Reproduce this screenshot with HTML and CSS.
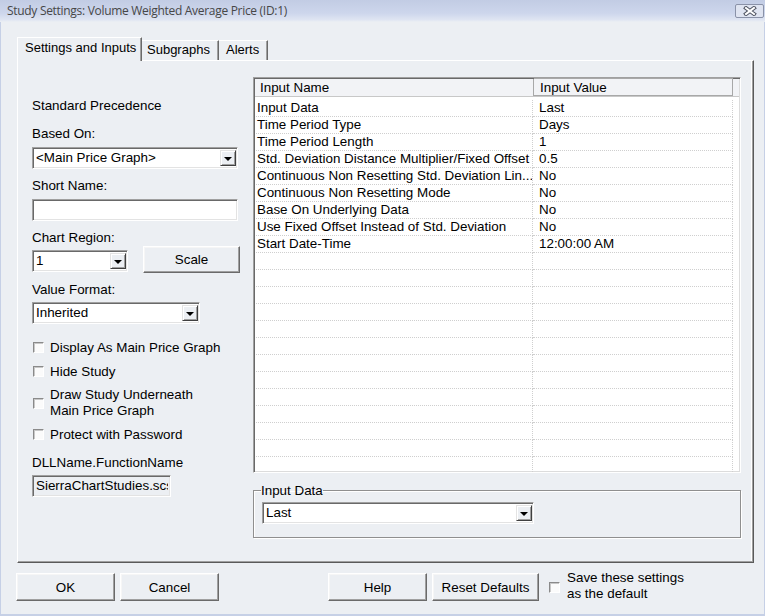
FILE: index.html
```html
<!DOCTYPE html>
<html>
<head>
<meta charset="utf-8">
<link rel="stylesheet" href="styles.css">
</head>
<body>
<div class="window">
  <div class="titlebar">
    <span class="title">Study Settings: Volume Weighted Average Price (ID:1)</span>
    <div class="close">
      <svg width="14" height="10" viewBox="0 0 14 10"><path d="M3 2 L11 8 M11 2 L3 8" stroke="#4d5260" stroke-width="4" stroke-linecap="square"/><path d="M3 2 L11 8 M11 2 L3 8" stroke="#ffffff" stroke-width="2" stroke-linecap="square"/></svg>
    </div>
  </div>

  <div class="tabs">
    <div class="tab tab-active">Settings and Inputs</div>
    <div class="tab tab-sub">Subgraphs</div>
    <div class="tab tab-alerts">Alerts</div>
  </div>

  <div class="panel">
    <div class="left">
      <div class="lbl">Standard Precedence</div>
      <div class="lbl m13">Based On:</div>
      <div class="field select w206 m6"><span class="sel-text">&lt;Main Price Graph&gt;</span><span class="arrow"><i></i></span></div>
      <div class="lbl m9">Short Name:</div>
      <div class="field input w206 m6"></div>
      <div class="lbl m9">Chart Region:</div>
      <div class="row-region">
        <div class="field select w96"><span class="sel-text">1</span><span class="arrow"><i></i></span></div>
        <div class="btn btn-scale">Scale</div>
      </div>
      <div class="lbl m9">Value Format:</div>
      <div class="field select w168 m5"><span class="sel-text">Inherited</span><span class="arrow"><i></i></span></div>
      <div class="check m16"><span class="box"></span><span class="ctext">Display As Main Price Graph</span></div>
      <div class="check m9"><span class="box"></span><span class="ctext">Hide Study</span></div>
      <div class="check two m8"><span class="box"></span><span class="ctext">Draw Study Underneath<br>Main Price Graph</span></div>
      <div class="check m8"><span class="box"></span><span class="ctext">Protect with Password</span></div>
      <div class="lbl m13">DLLName.FunctionName</div>
      <div class="field input readonly w139 m5"><span class="sel-text">SierraChartStudies.scs</span></div>
    </div>

    <div class="right">
      <div class="grid">
        <div class="ghead">
          <div class="hc hc-name">Input Name</div>
          <div class="hc hc-value">Input Value</div>
          <div class="hc hc-fill"></div>
        </div>
        <div class="gbody">
          <div class="grow"><span class="gn">Input Data</span><span class="gv">Last</span></div>
          <div class="grow"><span class="gn">Time Period Type</span><span class="gv">Days</span></div>
          <div class="grow"><span class="gn">Time Period Length</span><span class="gv">1</span></div>
          <div class="grow"><span class="gn">Std. Deviation Distance Multiplier/Fixed Offset</span><span class="gv">0.5</span></div>
          <div class="grow"><span class="gn">Continuous Non Resetting Std. Deviation Lin...</span><span class="gv">No</span></div>
          <div class="grow"><span class="gn">Continuous Non Resetting Mode</span><span class="gv">No</span></div>
          <div class="grow"><span class="gn">Base On Underlying Data</span><span class="gv">No</span></div>
          <div class="grow"><span class="gn">Use Fixed Offset Instead of Std. Deviation</span><span class="gv">No</span></div>
          <div class="grow"><span class="gn">Start Date-Time</span><span class="gv">12:00:00 AM</span></div>
          <div class="grow"><span class="gn"></span><span class="gv"></span></div>
          <div class="grow"><span class="gn"></span><span class="gv"></span></div>
          <div class="grow"><span class="gn"></span><span class="gv"></span></div>
          <div class="grow"><span class="gn"></span><span class="gv"></span></div>
          <div class="grow"><span class="gn"></span><span class="gv"></span></div>
          <div class="grow"><span class="gn"></span><span class="gv"></span></div>
          <div class="grow"><span class="gn"></span><span class="gv"></span></div>
          <div class="grow"><span class="gn"></span><span class="gv"></span></div>
          <div class="grow"><span class="gn"></span><span class="gv"></span></div>
          <div class="grow"><span class="gn"></span><span class="gv"></span></div>
          <div class="grow"><span class="gn"></span><span class="gv"></span></div>
          <div class="grow"><span class="gn"></span><span class="gv"></span></div>
          <div class="grow"><span class="gn"></span><span class="gv"></span></div>
        </div>
      </div>
      <fieldset class="group">
        <legend>Input Data</legend>
        <div class="field select w272"><span class="sel-text">Last</span><span class="arrow"><i></i></span></div>
      </fieldset>
    </div>
  </div>

  <div class="footer">
    <div class="btn btn-foot">OK</div>
    <div class="btn btn-foot m-cancel">Cancel</div>
    <div class="btn btn-foot m-help">Help</div>
    <div class="btn btn-foot btn-reset">Reset Defaults</div>
    <span class="box foot-box"></span>
    <span class="foot-text">Save these settings<br>as the default</span>
  </div>
</div>
</body>
</html>
```

FILE: styles.css
```css
* { box-sizing: border-box; }
html, body { margin: 0; padding: 0; }
body {
  font-family: "Liberation Sans", Arial, sans-serif;
  font-size: 13.4px;
  color: #000;
  background: #eceff3;
}
.window {
  width: 765px;
  height: 616px;
  background: #eceff3;
  box-shadow: inset 1px 0 0 #c6d0e6, inset -1px 0 0 #c6d0e6, inset 0 -2px 0 #c6d0e6;
  overflow: hidden;
}
.titlebar {
  height: 22px;
  display: flex;
  align-items: flex-start;
  padding-left: 7px;
  background: linear-gradient(#c2cce4 0%, #cdd6ec 60%, #dfe5f2 90%, #eceff3 100%);
}
.title {
  font-family: "Open Sans", "Liberation Sans", sans-serif;
  font-size: 12px;
  line-height: 22px;
  color: #474747;
  letter-spacing: -0.3px;
}
.close {
  margin-left: auto;
  margin-top: 4px;
  margin-right: 1px;
  width: 29px;
  height: 14px;
  border: 1px solid #8a92a8;
  border-radius: 2px;
  background: #dfe4f1;
  display: flex;
  align-items: center;
  justify-content: center;
}
.close svg { display: block; }

.tabs {
  margin-top: 15px;
  margin-left: 17px;
  height: 23px;
  display: flex;
  align-items: flex-end;
  font-size: 13px;
}
.tab {
  height: 20px;
  line-height: 18px;
  border-top: 1px solid #fff;
  border-right: 1px solid #6a6a6a;
  box-shadow: inset -1px 0 0 #a0a0a0;
  background: #eceff3;
  white-space: nowrap;
}
.tab-active {
  position: relative;
  z-index: 1;
  height: 24px;
  margin-bottom: -1px;
  width: 125px;
  padding-left: 7px;
  line-height: 20px;
  border-left: 1px solid #fff;
}
.tab-sub { width: 77px; padding-left: 5px; }
.tab-alerts { width: 49px; padding-left: 7px; }

.panel {
  width: 737px;
  height: 503px;
  margin-left: 17px;
  border: 1px solid;
  border-color: #fff #5a5a5a #5a5a5a #fff;
  box-shadow: inset -1px -1px 0 #a0a0a0, inset -2px 0 0 #fff;
  display: flex;
  padding-top: 16px;
}
.left {
  width: 222px;
  padding-left: 14px;
  padding-top: 21px;
  display: flex;
  flex-direction: column;
  align-items: flex-start;
}
.lbl { line-height: 15px; height: 15px; white-space: nowrap; }
.m5 { margin-top: 5px; }
.m6 { margin-top: 6px; }
.m8 { margin-top: 8px; }
.m9 { margin-top: 9px; }
.m13 { margin-top: 13px; }
.m16 { margin-top: 16px; }

.field {
  height: 22px;
  border: 1px solid;
  border-color: #a0a0a0 #fff #fff #a0a0a0;
  box-shadow: inset 1px 1px 0 #696969, inset -1px -1px 0 #e3e3e3;
  background: #fff;
  display: flex;
  align-items: center;
  padding: 0 2px 0 3px;
  white-space: nowrap;
  overflow: hidden;
}
.readonly { background: #eceff3; }
.w206 { width: 206px; }
.w96 { width: 96px; }
.w168 { width: 168px; }
.w139 { width: 139px; }
.w272 { width: 272px; }
.sel-text { flex: 1; line-height: 16px; overflow: hidden; }
.arrow {
  width: 16px;
  height: 16px;
  border: 1px solid;
  border-color: #e3e3e3 #404040 #404040 #e3e3e3;
  box-shadow: inset 1px 1px 0 #fff, inset -1px -1px 0 #a0a0a0;
  background: #eceff3;
  display: flex;
  align-items: center;
  justify-content: center;
  flex: none;
  margin-right: -1px;
}
.arrow i {
  display: block;
  width: 0;
  height: 0;
  border-left: 4px solid transparent;
  border-right: 4px solid transparent;
  border-top: 4px solid #000;
  margin-top: 1px;
}

.row-region {
  margin-top: 1px;
  display: flex;
  align-items: flex-start;
}
.row-region .field { margin-top: 4px; }

.btn {
  border: 1px solid;
  border-color: #fff #6a6a6a #6a6a6a #fff;
  box-shadow: inset -1px -1px 0 #a0a0a0, inset 1px 1px 0 #f6f6f6;
  background: #eceff3;
  display: flex;
  align-items: center;
  justify-content: center;
  white-space: nowrap;
}
.btn-scale { width: 97px; height: 27px; margin-left: 15px; }

.check {
  display: flex;
  align-items: center;
  line-height: 15px;
  white-space: nowrap;
}
.check.two { line-height: 16px; }
.box {
  display: block;
  width: 11px;
  height: 11px;
  margin-left: 1px;
  border: 1px solid;
  border-color: #8a8a8a #fff #fff #8a8a8a;
  box-shadow: inset 1px 1px 0 #c8c8c8;
  background: #fbfbfb;
  flex: none;
}
.ctext { margin-left: 6px; }

.right {
  margin-left: 13px;
  width: 488px;
  display: flex;
  flex-direction: column;
}
.grid {
  width: 488px;
  height: 396px;
  border: 1px solid;
  border-color: #a0a0a0 #fff #fff #a0a0a0;
  box-shadow: inset 1px 1px 0 #696969, inset -1px -1px 0 #dcdcdc;
  background: #fff;
  padding: 1px;
  overflow: hidden;
}
.ghead {
  display: flex;
  height: 18px;
  background: #f2f3f6;
  border-bottom: 1px solid #c8c8c8;
}
.hc { line-height: 17px; white-space: nowrap; }
.hc-name { width: 279px; padding-left: 5px; border-right: 1px solid #a8a8a8; }
.hc-value { width: 199px; padding-left: 6px; border: 1px solid #a8a8a8; border-left: none; margin-top: -1px; }
.hc-fill { flex: 1; }
.gbody { padding-top: 3px; padding-left: 1px; }
.grow {
  display: flex;
  height: 17px;
  width: 477px;
}
.gn, .gv {
  height: 17px;
  line-height: 16px;
  border-bottom: 1px dotted #cfcfcf;
  border-right: 1px dotted #cfcfcf;
  white-space: nowrap;
  overflow: hidden;
}
.gn { width: 277px; padding-left: 1px; }
.gv { width: 200px; padding-left: 6px; }

.group {
  margin: 10px 0 0 0;
  padding: 0 0 0 7px;
  height: 55px;
  width: 488px;
  border: 1px solid #8f8f8f;
  box-shadow: inset 1px 1px 0 #fff, 1px 1px 0 #fff;
}
.group legend {
  padding: 0;
  line-height: 15px;
  margin-left: 0;
}
.group .field { margin-top: 4px; margin-left: 1px; }

.footer {
  margin-top: 10px;
  padding-left: 16px;
  display: flex;
  align-items: center;
  height: 28px;
}
.btn-foot { width: 99px; height: 28px; }
.m-cancel { margin-left: 5px; }
.m-help { margin-left: 109px; }
.btn-reset { width: 107px; margin-left: 5px; }
.foot-box { margin-left: 10px; }
.foot-text { margin-left: 7px; line-height: 16px; margin-top: -2px; }
```
